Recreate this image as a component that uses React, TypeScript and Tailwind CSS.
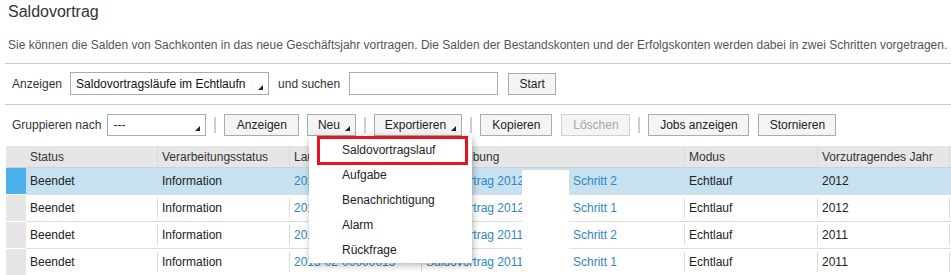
import React from "react";

const Corner = () => (
  <svg width="5" height="5" viewBox="0 0 5 5" className="absolute right-[5px] bottom-[4px]">
    <polygon points="5,0 5,5 0,5" fill="#222" />
  </svg>
);

const Btn = ({ label, w, arrow, disabled }: { label: string; w: string; arrow?: boolean; disabled?: boolean }) => (
  <div
    className={`relative h-[22px] ${w} flex items-center justify-center border bg-[#f4f4f4] ${
      disabled ? "border-[#cfcfcf] text-[#a8a8a8]" : "border-[#ababab] text-[#222]"
    } ${arrow ? "pr-[6px]" : ""}`}
  >
    {label}
    {arrow && <Corner />}
  </div>
);

const Sep = () => <div className="w-[2px] h-[16px] bg-[#cdcdcd]" />;

const rows = [
  { lauf: "2013-02-00000018", desc: "Saldovortrag 2012", step: "Schritt 2", year: "2012", sel: true },
  { lauf: "2013-02-00000017", desc: "Saldovortrag 2012", step: "Schritt 1", year: "2012" },
  { lauf: "2013-02-00000016", desc: "Saldovortrag 2011", step: "Schritt 2", year: "2011" },
  { lauf: "2013-02-00000015", desc: "Saldovortrag 2011", step: "Schritt 1", year: "2011" },
];

const cols = "grid grid-cols-[20px_131px_132px_132px_263px_133px_132px_2px]";

const Cell = ({ children, sel, first }: { children?: React.ReactNode; sel?: boolean; first?: boolean }) => (
  <div className={`h-[27px] py-[3px] border-b border-[#dedede] ${sel ? "bg-[#c6e1f0]" : "bg-white"}`}>
    <div className={`h-full flex items-center pl-[4px] whitespace-nowrap overflow-hidden ${first ? "" : "border-l border-[#dcdcdc]"}`}>
      {children}
    </div>
  </div>
);

const App = () => {
  return (
    <div className="relative w-[951px] h-[275px] overflow-hidden bg-white font-['Liberation_Sans',Arial,sans-serif] text-[12px] leading-[14px] text-[#222]">
      <h1 className="pl-[8px] pt-[3px] text-[16px] leading-[18px] text-[#333]">Saldovortrag</h1>
      <p className="pl-[8px] mt-[17px] leading-[14px] text-[#555]">
        Sie können die Salden von Sachkonten in das neue Geschäftsjahr vortragen. Die Salden der Bestandskonten und der Erfolgskonten werden dabei in zwei Schritten vorgetragen.
      </p>
      <div className="ml-[5px] mt-[11px] border-t border-[#cccccc]" />

      <div className="flex items-center h-[23px] mt-[8px] pl-[12px] text-[#333]">
        <span>Anzeigen</span>
        <div className="relative ml-[8px] w-[199px] h-[23px] border border-[#ababab] bg-white flex items-center pl-[5px] overflow-hidden text-[#111]">
          <span className="whitespace-nowrap">Saldovortragsläufe im Echtlaufn</span>
          <Corner />
        </div>
        <span className="ml-[9px]">und suchen</span>
        <div className="ml-[9px] w-[149px] h-[23px] border border-[#ababab] bg-white" />
        <div className="ml-[10px]">
          <Btn label="Start" w="w-[48px]" />
        </div>
      </div>
      <div className="ml-[5px] mt-[9px] border-t border-[#cccccc]" />

      <div className="flex items-center gap-[8px] h-[22px] mt-[9px] pl-[12px]">
        <span className="text-[#333] mr-[-2px]">Gruppieren nach</span>
        <div className="relative w-[99px] h-[22px] border border-[#ababab] bg-white flex items-center pl-[5px]">
          <span>---</span>
          <Corner />
        </div>
        <Sep />
        <Btn label="Anzeigen" w="w-[75px]" />
        <Btn label="Neu" w="w-[49px]" arrow />
        <Sep />
        <Btn label="Exportieren" w="w-[88px]" arrow />
        <Sep />
        <Btn label="Kopieren" w="w-[72px]" />
        <div className="ml-[1px]">
          <Btn label="Löschen" w="w-[69px]" disabled />
        </div>
        <Sep />
        <Btn label="Jobs anzeigen" w="w-[101px]" />
        <div className="ml-[1px]">
          <Btn label="Stornieren" w="w-[78px]" />
        </div>
      </div>

      <div className={`${cols} ml-[6px] mt-[10px]`}>
        <div className="h-[22px] bg-[#e6e6e6] border-b border-[#d2d2d2]" />
        {["Status", "Verarbeitungsstatus", "Laufnummer", "Beschreibung", "Modus", "Vorzutragendes Jahr", ""].map((h, i) => (
          <div
            key={i}
            className={`h-[22px] bg-[#e6e6e6] border-b border-[#d2d2d2] flex items-center pl-[4px] text-[#333] whitespace-nowrap ${
              i === 0 ? "" : "border-l border-l-[#d9d9d9]"
            }`}
          >
            {h}
          </div>
        ))}

        {rows.map((r, i) => (
          <React.Fragment key={i}>
            <div className={`h-[27px] border-b border-white ${r.sel ? "bg-[#4ab1ec]" : "bg-[#e6e6e6]"}`} />
            <Cell sel={r.sel} first>Beendet</Cell>
            <Cell sel={r.sel}>Information</Cell>
            <Cell sel={r.sel}>
              <span className="text-[#2f87c3]">{r.lauf}</span>
            </Cell>
            <Cell sel={r.sel}>
              <span className="w-[147px] shrink-0 text-[#2f87c3]">{r.desc}</span>
              <span className="text-[#2f87c3]">{r.step}</span>
            </Cell>
            <Cell sel={r.sel}>Echtlauf</Cell>
            <Cell sel={r.sel}>{r.year}</Cell>
            <Cell sel={r.sel} />
          </React.Fragment>
        ))}
      </div>

      {/* redacted area */}
      <div className="absolute left-[522px] top-[170px] w-[47px] h-[105px] bg-white" />

      {/* Neu dropdown menu */}
      <div className="absolute left-[309px] top-[136px] w-[163px] h-[127px] bg-white shadow-[1px_2px_7px_rgba(0,0,0,0.3)] pt-[1px]">
        {["Saldovortragslauf", "Aufgabe", "Benachrichtigung", "Alarm", "Rückfrage"].map((m) => (
          <div key={m} className="h-[25px] flex items-center pl-[33px] text-[#222]">
            {m}
          </div>
        ))}
        <div className="absolute left-[8px] top-0 w-[151px] h-[29px] border-[3px] border-[#e3151e]" />
      </div>
    </div>
  );
};

export default App;
